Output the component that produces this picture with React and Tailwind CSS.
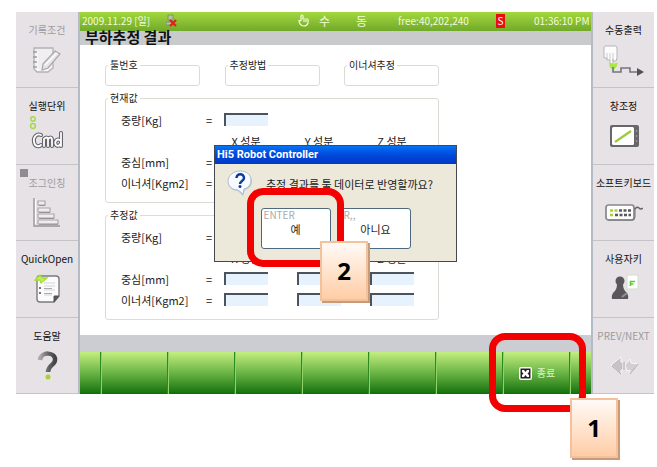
import React from "react";

function NoteIcon() {
  return (
    <svg width="32" height="32" viewBox="0 0 32 32" fill="none">
      <path d="M3 4h19v20l-5 4H6l-3-3z" fill="#f0eef0" stroke="#b5b2b5" strokeWidth="1.3" />
      <path d="M6 7v19h11" stroke="#fff" strokeWidth="1" />
      <path d="M2 8h4M2 13h4M2 18h4M2 23h4" stroke="#a09da0" strokeWidth="1.4" />
      <path d="M12 20L24 7l5 3-12 14-6 2z" fill="#e6e4e6" stroke="#aaa7aa" strokeWidth="1.2" />
      <path d="M14 21L26 9" stroke="#fff" strokeWidth="1.2" />
    </svg>
  );
}

function CmdIcon() {
  const word =
    "M9 13C5 11 1 15 2 20c1 5 5 5 7 3M12 24v-7q3-3 4 0v7v-7q3-3 4 0v7M29 11v13M29 19c-4-4-7 1-5 4c2 2 5 0 5-3";
  return (
    <svg className="overflow-visible" width="32" height="32" viewBox="0 0 32 32" fill="none">
      <circle cx="2" cy="-1" r="2.2" stroke="#a6d94a" strokeWidth="1.5" />
      <circle cx="2" cy="6" r="2.4" stroke="#a6d94a" strokeWidth="1.5" />
      <g transform="translate(1 2)" strokeLinecap="round" strokeLinejoin="round">
        <path d={word} stroke="#66646a" strokeWidth="4" />
        <path d={word} stroke="#fff" strokeWidth="1.8" />
      </g>
    </svg>
  );
}

function JogIcon() {
  return (
    <svg width="32" height="32" viewBox="0 0 32 32" fill="none">
      <path d="M3 1v28h26" stroke="#aaa8ab" strokeWidth="1.8" />
      <path d="M4.500 2v25" stroke="#fff" strokeWidth="1" />
      <g fill="#eeecee" stroke="#aaa8ab" strokeWidth="1.200">
        <path d="M7 4h7v4H7zM7 11h12v4H7zM7 17h16v4H7zM7 23h20v4H7z" />
      </g>
      <path d="M8 8.500h6M8 15.500h11M8 21.500h15M8 27.300h19" stroke="#969397" strokeWidth="1" />
    </svg>
  );
}

function QuickIcon() {
  return (
    <svg width="32" height="32" viewBox="0 0 32 32" fill="none">
      <path d="M8 3h17q3 0 3 3v17l-5 6H9q-3 0-3-3V6q0-3 2-3z" fill="#fbfbfb" stroke="#7c7b7f" strokeWidth="1.4" />
      <path d="M28 23h-5v6z" fill="#555" stroke="#555" />
      <path d="M13 10h11M13 13h11M13 17h11M13 22h8" stroke="#d6d4d8" strokeWidth="1.2" />
      <path d="M13 15.500h8M13 20.500h8" stroke="#aaa" strokeWidth="1" />
      <circle cx="9" cy="15" r="1.100" fill="#555" />
      <circle cx="9" cy="20" r="1.100" fill="#555" />
      <path d="M4 7l5-5 2 3h5l-6 5-1-3z" fill="#c4f05c" stroke="#a6dc38" strokeWidth="1.3" />
    </svg>
  );
}

function HelpIcon() {
  return (
    <svg width="32" height="32" viewBox="0 0 32 32" fill="none">
      <defs>
        <linearGradient id="help" x1="0" x2="1">
          <stop stopColor="#aaa" />
          <stop offset=".55" stopColor="#66656a" />
          <stop offset="1" stopColor="#444" />
        </linearGradient>
      </defs>
      <path d="M9 10C10 1 25 2 24 10c0 5-7 5-7 12" stroke="url(#help)" strokeWidth="4.500" />
      <circle cx="17" cy="27" r="2.500" fill="#a9cf3c" />
    </svg>
  );
}

function OutputIcon() {
  return (
    <svg width="44" height="32" viewBox="0 0 44 32" fill="none">
      <path d="M3 2h10q2 0 2 2v10l-1 3h-3v-2v5H8v-4H5v-2H2V4q0-2 1-2z" fill="#fcfcfc" stroke="#b7b5b9" strokeWidth="1" />
      <path d="M5 9v6M8 9v7M11 9v7" stroke="#c9c7cb" strokeWidth="1" />
      <path d="M8 19l3 2 4-2-1 4-3 3-3-3z" fill="#a9e63e" stroke="#a9e63e" />
      <path d="M11 23v5h8v-4h9v4h8" stroke="#77757a" strokeWidth="1.600" />
      <path d="M35 24l7 4-7 4z" fill="#535156" />
    </svg>
  );
}

function WindowIcon() {
  return (
    <svg width="32" height="32" viewBox="0 0 32 32" fill="none">
      <rect x="2" y="5" width="29" height="22" rx="2" fill="#68666b" />
      <rect x="4" y="7" width="22" height="18" rx="1.500" fill="#fff" />
      <path d="M7 22L23 11" stroke="#9acb3b" strokeWidth="2.200" />
      <path d="M28.500 10v2M28.500 15v2M28.500 20v2" stroke="#918f94" strokeWidth="1.500" />
    </svg>
  );
}

function KeyboardIcon() {
  return (
    <svg width="38" height="32" viewBox="0 0 38 32" fill="none">
      <rect x="1" y="8" width="28" height="15" rx="2.500" fill="#fdfdfd" stroke="#88868b" strokeWidth="1.700" />
      <path d="M3 23h24q3 0 3-3V11" stroke="#77757a" strokeWidth="1" />
      <path d="M5 13.500h8M5 18h4" stroke="#a9cf3c" strokeWidth="2.500" strokeDasharray="3 1.500" />
      <path d="M14 13.500h13M10 18h16" stroke="#5a585d" strokeWidth="2.500" strokeDasharray="3 1.500" />
      <path d="M30 12q2-3 4-1t4 0" stroke="#66646a" strokeWidth="1.600" />
    </svg>
  );
}

function UserIcon() {
  return (
    <svg width="32" height="32" viewBox="0 0 32 32" fill="none">
      <rect x="19" y="2" width="11" height="14" fill="#fff" stroke="#d2dccf" />
      <path d="M22.500 13V8.500H27M22.500 11h3" stroke="#5dcb35" strokeWidth="1.600" />
      <circle cx="12" cy="8" r="4.500" fill="#59575c" />
      <path d="M9 11h6q0 6 4 9 2 3 1 6H4q-1-3 1-6 4-3 4-9z" fill="#59575c" />
      <path d="M14 24l5-4" stroke="#929095" strokeWidth="2" />
    </svg>
  );
}

function PageIcon() {
  return (
    <svg width="32" height="32" viewBox="0 0 32 32" fill="none">
      <path d="M3 15l10-8v5h2v8h-2v4z" fill="#c6c3c7" stroke="#f8f7f8" strokeWidth="1" />
      <path d="M19 21l-2-6 5-6 1 4 7 1-8 10v-4z" fill="#d2cfd3" stroke="#f8f7f8" strokeWidth="1" />
      <path d="M4 16l9 8M22 24l8-10M16 20V12" stroke="#aaa7ab" strokeWidth="1" />
    </svg>
  );
}

const leftKeys = [
  { label: "기록조건", Icon: NoteIcon, dim: true },
  { label: "실행단위", Icon: CmdIcon },
  { label: "조그인칭", Icon: JogIcon, dim: true, marker: true },
  { label: "QuickOpen", Icon: QuickIcon },
  { label: "도움말", Icon: HelpIcon },
];

const rightKeys = [
  { label: "수동출력", Icon: OutputIcon },
  { label: "창조정", Icon: WindowIcon },
  { label: "소프트키보드", Icon: KeyboardIcon },
  { label: "사용자키", Icon: UserIcon },
  { label: "PREV/NEXT", Icon: PageIcon, dim: true },
];

function SideKeys({ items, edge }) {
  return (
    <nav className={`grid grid-rows-5 bg-[#e6e2e6] ${edge}`}>
      {items.map(({ label, Icon, dim, marker }) => (
        <button
          key={label}
          type="button"
          className="relative flex flex-col items-center gap-[7px] border-b border-[#c4c3c8] pt-[11px] text-[10px] leading-[14px] whitespace-nowrap"
        >
          {marker && <span className="absolute top-1 left-1 size-2 bg-[#8d8c90]" />}
          <span className={dim ? "text-[#9c9a9e]" : "text-[#111]"}>{label}</span>
          <Icon />
        </button>
      ))}
    </nav>
  );
}

function StatusBar() {
  return (
    <header className="grid h-[19px] grid-cols-[84fr_132fr_21fr_37fr_42fr_98fr_38fr_57fr] items-center bg-linear-to-b from-[#a4d83e] to-[#71a92a] pb-[2px] pl-[2px] text-[10px] leading-[14px] whitespace-nowrap text-[#f2fbdc]">
      <span>2009.11.29 [일]</span>
      <svg width="12" height="14" viewBox="0 0 12 14" fill="none">
        <path d="M2 1h5v5H2zM0 8h8v3H0z" fill="#b7c4a4" stroke="#829067" />
        <path d="M4 6l6 6M10 6l-6 6" stroke="#e02018" strokeWidth="2.200" />
      </svg>
      <svg width="11" height="13" viewBox="0 0 11 13" fill="none" stroke="#f2fbdc" strokeWidth="1.200">
        <path d="M3 7V2q1-2 2 0v3l4 0q1.500 0 1 2v2q-1 3-4 3T1.500 9L1 6.500 3 7" />
        <path d="M5 7h4" />
      </svg>
      <span className="text-xs">수</span>
      <span className="text-xs">동</span>
      <span>free:40,202,240</span>
      <span className="w-[9px] bg-[#e90d0d] text-center text-white">S</span>
      <span>01:36:10 PM</span>
    </header>
  );
}

const box = "min-w-0 rounded-[3px] border border-[#dcdbd6]";
const caption = "ml-[2px] h-3 px-[2px] text-[10px] leading-3 text-[#222]";
const rows = ["중심[mm]", "이너셔[Kgm2]"];
const axes = ["X", "Y", "Z"];
const field = "h-[13px] w-full border-t-2 border-l-2 border-[#4b545c] bg-[#e6f2fd] text-[10px] outline-none";

function ValueRow({ id, label, children }) {
  return (
    <div className="flex h-[21px] items-center">
      <label htmlFor={id} className="w-[85px]">
        {label}
      </label>
      <span className="w-[18px]">=</span>
      <div className="grid flex-1 grid-cols-[repeat(3,44px)] items-center justify-between">{children}</div>
    </div>
  );
}

function ValueGroup({ title, name }) {
  return (
    <fieldset className={`${box} h-[111px]`}>
      <legend className={caption}>{title}</legend>
      <div className="pt-[5px] pr-6 pl-[15px] text-[11px] leading-[14px] whitespace-nowrap text-[#222]">
        <ValueRow id={`${name}-weight`} label="중량[Kg]">
          <input id={`${name}-weight`} className={field} />
        </ValueRow>
        <div className="flex h-[21px] items-center pl-[103px]">
          <div className="grid flex-1 grid-cols-[repeat(3,44px)] justify-between text-center">
            {axes.map((axis) => (
              <span key={axis}>{axis} 성분</span>
            ))}
          </div>
        </div>
        {rows.map((label, r) => (
          <ValueRow key={label} id={`${name}-${r}-X`} label={label}>
            {axes.map((axis) => (
              <input key={axis} id={`${name}-${r}-${axis}`} aria-label={`${label} ${axis}`} className={field} />
            ))}
          </ValueRow>
        ))}
      </div>
    </fieldset>
  );
}

function Callout({ place, children }) {
  return (
    <div
      className={`absolute z-30 flex h-[60px] w-12 items-center justify-center border-2 border-[#f3c19b] bg-linear-to-b from-[#fffaf6] to-[#ffcda6] font-['Open_Sans',sans-serif] text-[24px] leading-8 font-bold text-black shadow-[2px_2px_0_#c99a78] ${place}`}
    >
      {children}
    </div>
  );
}

function Ring({ place }) {
  return (
    <div
      className={`pointer-events-none absolute z-20 h-[79px] w-[97px] rounded-[16px] border-[7px] border-[#f30000] ${place}`}
    />
  );
}

const choice =
  "relative h-[41px] w-[70px] rounded-[3px] border border-[#4f6a80] bg-white text-[11px] leading-[14px] text-[#222]";
const hint = "absolute top-0 left-[2px] text-[10px] leading-3 text-[#aaa]";

function ConfirmDialog() {
  return (
    <div
      role="dialog"
      aria-labelledby="dialog-title"
      className="absolute top-[100px] left-[134px] z-10 h-[117px] w-[243px] border border-[#45484c] bg-[#ece9db]"
    >
      <h2
        id="dialog-title"
        className="h-[18px] bg-linear-to-b from-[#0873f5] via-[#0048dc] to-[#0039c6] pl-[2px] font-[Roboto,sans-serif] text-[11px] leading-[18px] font-bold text-white"
      >
        Hi5 Robot Controller
      </h2>
      <div className="flex items-center gap-[13px] pt-[6px] pl-3">
        <svg width="26" height="28" viewBox="0 0 26 28" fill="none">
          <path d="M13 2c7 0 12 4 12 9s-3 8-7 9l-2 6-5-5C5 21 1 17 1 12S6 2 13 2z" fill="#bcc6d6" />
          <path d="M13 1c7 0 11 4 11 9s-3 8-7 9l-1 5-5-4C5 20 1 16 1 11S6 1 13 1z" fill="#f7faff" stroke="#b0bdd0" />
          <path d="M9.500 8c0-5 7.500-5 7.500 0 0 3-4 3-4 6" stroke="#0c3d9c" strokeWidth="2.500" />
          <circle cx="13" cy="16.500" r="1.500" fill="#0c3d9c" />
        </svg>
        <p className="text-[11px] leading-[14px] whitespace-nowrap text-[#222]">추정 결과를 툴 데이터로 반영할까요?</p>
      </div>
      <div className="flex justify-center gap-[10px] pt-[10px]">
        <button type="button" className={choice}>
          <span className={hint}>ENTER</span>예
        </button>
        <button type="button" className={choice}>
          <span className={hint}>R,,</span>아니요
        </button>
      </div>
      <Ring place="top-[42px] left-8" />
      <Callout place="top-[95px] left-[105px]">2</Callout>
    </div>
  );
}

const slot = "border-l border-[#8fd268] shadow-[-1px_0_0_#2f8a22]";

function FunctionBar() {
  return (
    <footer className="grid h-[42px] grid-cols-[21px_repeat(7,1fr)_21px] bg-linear-to-b from-[#c3ee80] via-[#69b445] to-[#087008]">
      <div />
      {[1, 2, 3, 4, 5, 6].map((n) => (
        <div key={n} className={slot} />
      ))}
      <div className={`relative flex ${slot}`}>
        <button
          type="button"
          className="flex flex-1 items-center justify-center gap-[5px] text-[10px] leading-[14px] text-[#d9f5c4]"
        >
          <svg width="13" height="13" viewBox="0 0 13 13">
            <rect width="13" height="13" rx="2" fill="#fff" />
            <rect x="1.500" y="1.500" width="10" height="10" fill="#222" />
            <path d="M3 3h2l1.500 2L8 3h2v2L8.500 6.500 10 8v2H8L6.500 8 5 10H3V8l1.500-1.500L3 5z" fill="#fff" />
          </svg>
          종료
        </button>
        <Ring place="-top-[19px] -left-[15px]" />
        <Callout place="top-[46px] left-[66px]">1</Callout>
      </div>
      <div className={slot} />
    </footer>
  );
}

export default function App() {
  return (
    <div className="min-h-screen bg-white pt-3 pr-[3px] pb-16 pl-4 font-['Noto_Sans_CJK_KR',sans-serif]">
      <div className="grid grid-cols-[64px_minmax(0,1fr)_63px]">
        <SideKeys items={leftKeys} edge="border-r-2 border-[#b4bbc5]" />
        <div className="flex flex-col">
          <StatusBar />
          <h1 className="h-[14px] bg-[#c7cbcc] pl-[5px] text-[15px] leading-3 font-bold text-[#111]">부하추정 결과</h1>
          <main className="relative bg-white pt-[14px] pb-[15px] pl-[25px]">
            <form className="flex w-[334px] flex-col gap-[6px]">
              <div className="flex justify-between">
                {["툴번호", "추정방법", "이너셔추정"].map((title) => (
                  <fieldset key={title} className={`${box} h-[27px] w-[95px]`}>
                    <legend className={caption}>{title}</legend>
                  </fieldset>
                ))}
              </div>
              <ValueGroup title="현재값" name="current" />
              <ValueGroup title="추정값" name="estimate" />
            </form>
            <ConfirmDialog />
          </main>
          <div className="h-[17px] bg-[#cccdd2]" />
          <FunctionBar />
        </div>
        <SideKeys items={rightKeys} edge="border-l-2 border-[#b4bbc5]" />
      </div>
    </div>
  );
}
